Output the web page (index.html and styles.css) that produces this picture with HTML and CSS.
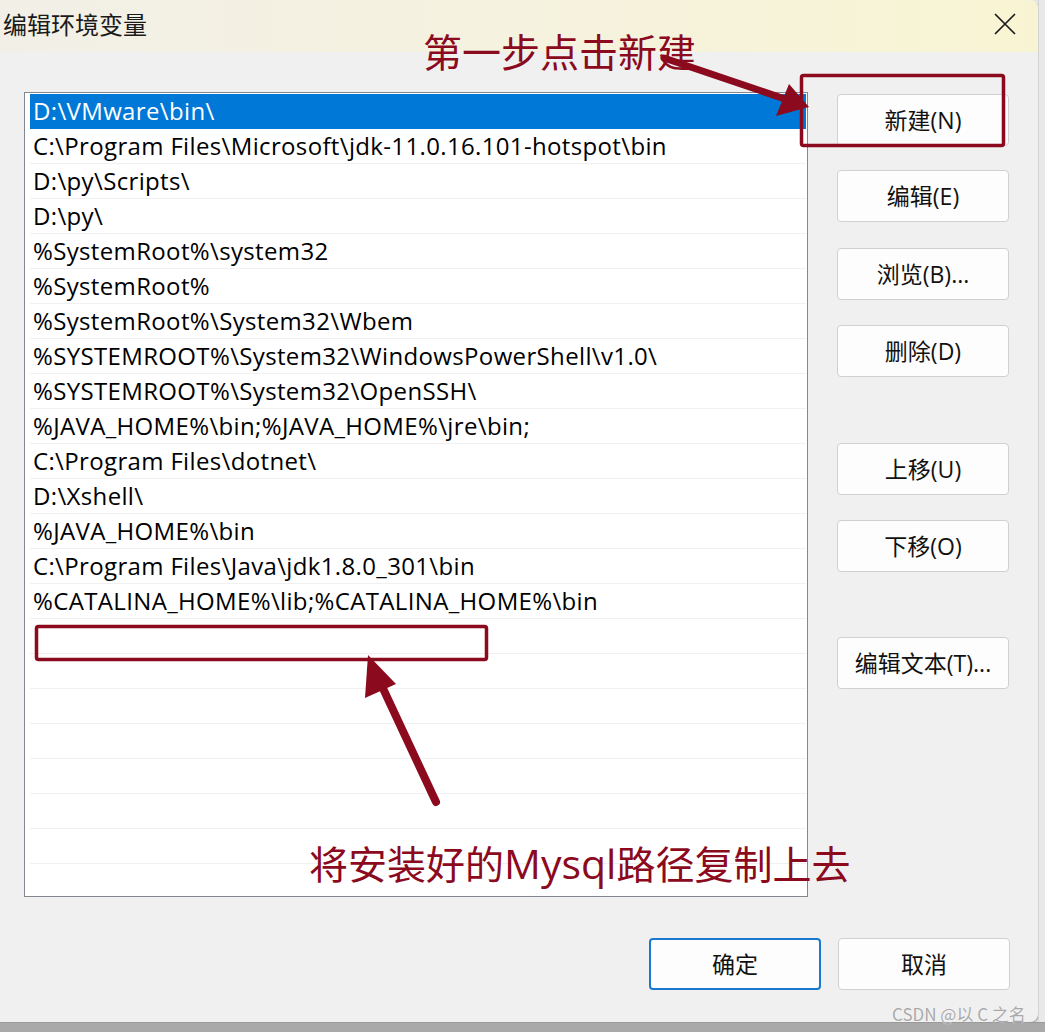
FILE: index.html
```html
<!DOCTYPE html>
<html lang="zh-CN">
<head>
<meta charset="utf-8">
<title>编辑环境变量</title>
<link rel="stylesheet" href="styles.css">
</head>
<body>
<div class="screen">
  <div class="row-top">
    <div class="dialog">
      <div class="titlebar">
        <span class="title">编辑环境变量</span>
        <svg class="close" width="22" height="22" viewBox="0 0 22 22"><path d="M1 1 L21 21 M21 1 L1 21" stroke="#1b1b1b" stroke-width="1.7" fill="none"/></svg>
      </div>
      <div class="content">
        <div class="list">
          <div class="item selected">D:\VMware\bin\</div>
          <div class="item">C:\Program Files\Microsoft\jdk-11.0.16.101-hotspot\bin</div>
          <div class="item">D:\py\Scripts\</div>
          <div class="item">D:\py\</div>
          <div class="item">%SystemRoot%\system32</div>
          <div class="item">%SystemRoot%</div>
          <div class="item">%SystemRoot%\System32\Wbem</div>
          <div class="item">%SYSTEMROOT%\System32\WindowsPowerShell\v1.0\</div>
          <div class="item">%SYSTEMROOT%\System32\OpenSSH\</div>
          <div class="item">%JAVA_HOME%\bin;%JAVA_HOME%\jre\bin;</div>
          <div class="item">C:\Program Files\dotnet\</div>
          <div class="item">D:\Xshell\</div>
          <div class="item">%JAVA_HOME%\bin</div>
          <div class="item">C:\Program Files\Java\jdk1.8.0_301\bin</div>
          <div class="item">%CATALINA_HOME%\lib;%CATALINA_HOME%\bin</div>
          <div class="item"></div>
          <div class="item"></div>
          <div class="item"></div>
          <div class="item"></div>
          <div class="item"></div>
          <div class="item"></div>
          <div class="item"></div>
          <div class="item"></div>
        </div>
        <div class="actions">
          <button class="btn b-new">新建(N)</button>
          <button class="btn b-edit">编辑(E)</button>
          <button class="btn b-browse">浏览(B)...</button>
          <button class="btn b-del">删除(D)</button>
          <button class="btn b-up">上移(U)</button>
          <button class="btn b-down">下移(O)</button>
          <button class="btn b-text">编辑文本(T)...</button>
        </div>
      </div>
      <div class="footer">
        <button class="btn primary">确定</button>
        <button class="btn">取消</button>
      </div>
    </div>
    <div class="side"></div>
  </div>
  <div class="bottom-strip"></div>

  <svg class="annot" width="1045" height="1032" viewBox="0 0 1045 1032">
    <g stroke="#8b0a1e" fill="none">
      <rect x="801.5" y="75.5" width="202" height="70" rx="2" stroke-width="3.5"/>
      <rect x="36.5" y="626.5" width="450" height="33" rx="2" stroke-width="3.5"/>
      <line x1="664" y1="58" x2="785" y2="99" stroke-width="7" stroke-linecap="round"/>
      <line x1="436" y1="802" x2="380" y2="682" stroke-width="8" stroke-linecap="round"/>
    </g>
    <g fill="#8b0a1e">
      <polygon points="809,107 776,116 789,84"/>
      <polygon points="368,655 365,698 396,684"/>
    </g>
  </svg>
  <div class="note note-top">第一步点击新建</div>
  <div class="note note-bottom">将安装好的<span class="latin">Mysql</span>路径复制上去</div>
  <div class="watermark">CSDN @以 C 之名</div>
</div>
</body>
</html>
```

FILE: styles.css
```css
html, body {
  margin: 0;
  padding: 0;
}
body {
  width: 1045px;
  height: 1032px;
  overflow: hidden;
  font-family: "Open Sans", "Noto Sans CJK SC", sans-serif;
}
.screen {
  position: relative;
  width: 1045px;
  height: 1032px;
  display: flex;
  flex-direction: column;
  background: #e6e6e6;
}
.row-top {
  display: flex;
  height: 1022px;
}
.dialog {
  width: 1038px;
  height: 1022px;
  background: #f0f0f0;
  border-bottom-right-radius: 8px;
  border-top-right-radius: 8px;
  display: flex;
  flex-direction: column;
  box-shadow: 1px 1px 1px rgba(0,0,0,0.25);
  overflow: hidden;
}
.side {
  flex: 1;
  background: #e9e9e9;
  border-left: 1px solid #d4d4d4;
}
.bottom-strip {
  height: 10px;
  background: #a9a9a9;
  border-top: 1px solid #9a9a9a;
}
.titlebar {
  height: 52px;
  flex: none;
  display: flex;
  align-items: center;
  justify-content: space-between;
  background: linear-gradient(90deg, #f2efe7 0%, #f5f2df 50%, #f8f4d3 100%);
  padding: 0 22px 0 3px;
  box-sizing: border-box;
}
.title {
  font-family: "Noto Sans CJK SC", sans-serif;
  font-size: 24px;
  color: #1a1a1a;
  margin-top: -6px;
}
.close {
  margin-top: -4px;
}
.content {
  display: flex;
  padding: 40px 0 0 24px;
}
.list {
  width: 784px;
  height: 805px;
  box-sizing: border-box;
  border: 1px solid #828790;
  background: #ffffff;
  padding: 1px 1px 0 5px;
  overflow: hidden;
}
.item {
  height: 35px;
  box-sizing: border-box;
  border-bottom: 1px solid #f0f0f0;
  padding-left: 3px;
  font-size: 24px;
  letter-spacing: 0.35px;
  line-height: 34px;
  color: #000;
  white-space: nowrap;
}
.item.selected {
  background: #0078d7;
  color: #fff;
  border-bottom-color: #0078d7;
}
.actions {
  display: flex;
  flex-direction: column;
  margin-left: 29px;
}
.btn {
  width: 172px;
  height: 52px;
  box-sizing: border-box;
  border: 1px solid #d0d0d0;
  border-radius: 4px;
  background: #fdfdfd;
  font-family: "Open Sans", "Noto Sans CJK SC", sans-serif;
  font-size: 23px;
  line-height: 48px;
  color: #111;
  padding: 0;
}
.b-new { margin-top: 2px; }
.b-edit { margin-top: 24px; }
.b-browse { margin-top: 26px; }
.b-del { margin-top: 25px; }
.b-up { margin-top: 66px; }
.b-down { margin-top: 25px; }
.b-text { margin-top: 65px; }
.footer {
  display: flex;
  justify-content: flex-end;
  gap: 17px;
  padding-right: 28px;
  margin-top: 41px;
}
.btn.primary {
  border: 2px solid #1a78d0;
}
.annot {
  position: absolute;
  left: 0;
  top: 0;
  pointer-events: none;
}
.note {
  position: absolute;
  font-family: "Noto Sans CJK SC", sans-serif;
  color: #8b0a1e;
  white-space: nowrap;
}
.note-top {
  left: 423px;
  top: 22px;
  font-size: 39px;
  line-height: 56px;
}
.note-bottom {
  left: 309px;
  top: 832px;
  font-size: 39px;
  line-height: 60px;
}
.latin {
  font-family: "Open Sans", sans-serif;
  font-size: 41px;
}
.watermark {
  position: absolute;
  left: 892px;
  top: 1001px;
  font-family: "Noto Sans CJK SC", sans-serif;
  font-size: 17px;
  color: #a9a9a9;
  text-shadow: 0 0 1px #fff;
  white-space: nowrap;
}
```
